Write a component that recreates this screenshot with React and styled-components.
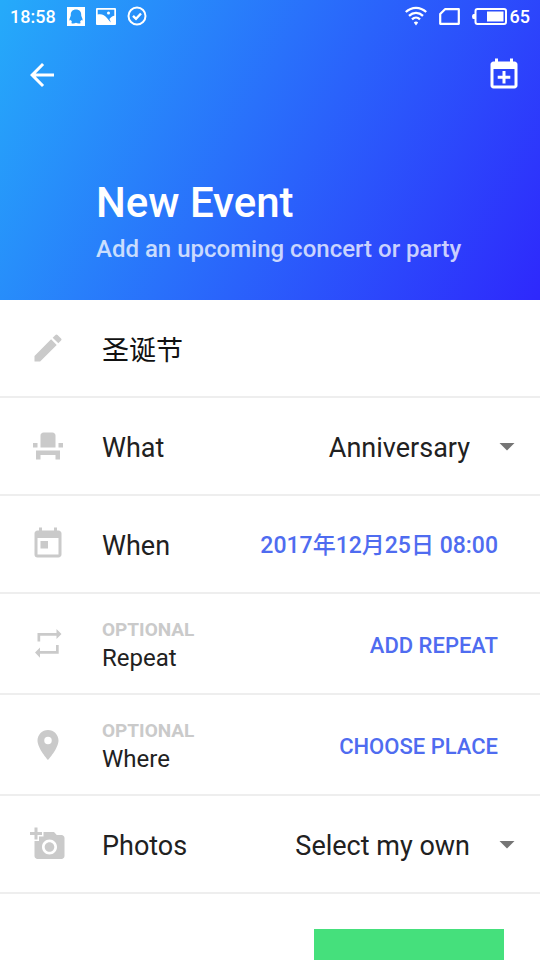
import { useState } from "react";
import styled, { createGlobalStyle } from "styled-components";
import {
  MdAddAPhoto,
  MdArrowBack,
  MdArrowDropDown,
  MdEdit,
  MdEventSeat,
  MdPlace,
  MdToday,
} from "react-icons/md";

const colors = {
  gradientStart: "#25abfa",
  gradientEnd: "#2e28fc",
  text: "#212121",
  icon: "#cacaca",
  caret: "#757575",
  divider: "#eeeeee",
  action: "#4f6cf0",
  submit: "#45e07c",
};

const GlobalStyle = createGlobalStyle`
  * {
    box-sizing: border-box;
  }

  body {
    margin: 0;
    background: #fff;
    color: ${colors.text};
    font-family: Roboto, "Noto Sans CJK SC", sans-serif;
  }

  button,
  input,
  select {
    margin: 0;
    padding: 0;
    border: 0;
    background: none;
    color: inherit;
    font-family: inherit;
  }

  svg {
    display: block;
    flex: none;
  }
`;

const Screen = styled.div`
  display: flex;
  flex-direction: column;
  height: 100vh;
  overflow: hidden;
`;

const Header = styled.header`
  flex: none;
  padding-bottom: 35px;
  color: #fff;
  background: linear-gradient(
    118deg,
    ${colors.gradientStart} 0%,
    ${colors.gradientEnd} 100%
  );
`;

const StatusBar = styled.div`
  display: flex;
  align-items: center;
  justify-content: space-between;
  height: 32px;
  padding: 0 10px;
  font-size: 18px;
  font-weight: 500;
`;

const StatusGroup = styled.div`
  display: flex;
  align-items: center;
  gap: ${({ $gap }) => $gap}px;
`;

const Battery = styled.span`
  display: flex;
  align-items: center;
  gap: 3px;
`;

const Toolbar = styled.nav`
  display: flex;
  align-items: center;
  justify-content: space-between;
  height: 86px;
  padding: 0 18px 0 24px;
`;

const IconButton = styled.button`
  cursor: pointer;
`;

const Heading = styled.div`
  padding: 61px 24px 0 96px;
`;

const Title = styled.h1`
  margin: 0 0 6px;
  font-size: 42px;
  font-weight: 500;
  line-height: 48px;
`;

const Subtitle = styled.p`
  margin: 0;
  color: rgba(255, 255, 255, 0.76);
  font-size: 24px;
  font-weight: 500;
  line-height: 32px;
`;

const Form = styled.form`
  flex: 1;
  min-height: 0;
  overflow-y: auto;
  scrollbar-width: none;
`;

const Row = styled.div`
  display: flex;
  align-items: center;
  gap: 36px;
  min-height: ${({ $tall }) => ($tall ? 101 : 98)}px;
  padding: 0 15px 0 30px;
  border-bottom: 2px solid ${colors.divider};

  > svg {
    color: ${colors.icon};
  }
`;

const Label = styled.label`
  flex: 1;
  padding-top: 4px;
  font-size: ${({ $small }) => ($small ? 24 : 27)}px;
  line-height: 32px;
`;

const Hint = styled.span`
  display: block;
  color: ${colors.icon};
  font-size: 19px;
  font-weight: 700;
  line-height: 24px;
`;

const NameInput = styled.input`
  flex: 1;
  min-width: 0;
  color: #111;
  font-size: 27px;
  outline: none;
`;

const SelectBox = styled.div`
  display: grid;
  align-items: center;

  > * {
    grid-area: 1 / 1;
  }

  > svg {
    justify-self: end;
    color: ${colors.caret};
    pointer-events: none;
  }
`;

const Select = styled.select`
  padding: 4px 55px 0 0;
  appearance: none;
  font-size: 27px;
  line-height: 32px;
  text-align-last: right;
  cursor: pointer;
`;

const ActionButton = styled.button`
  margin-right: 27px;
  padding-top: 4px;
  color: ${colors.action};
  font-size: ${({ $caps }) => ($caps ? 22 : 23)}px;
  font-weight: 500;
  line-height: 32px;
  cursor: pointer;
`;

const Footer = styled.div`
  display: flex;
  justify-content: flex-end;
  padding: 35px 36px;
`;

const SubmitButton = styled.button`
  width: 190px;
  height: 72px;
  background: ${colors.submit};
  cursor: pointer;
`;

const PenguinIcon = () => (
  <svg width="18" height="19" viewBox="0 0 18 19">
    <path
      fill="currentColor"
      fillRule="evenodd"
      d="M0 0h18v19H0zM9 2.6c-3.4 0-5.200 2.200-5.200 5.200 0 1-.1 1.500-.7 2.600-.7 1.300-.9 2.700-.4 3.100.4.2.9-.2 1.200-.7.2.9.6 1.500 1.200 2.100-.9.4-1 1.300.1 1.500 1.300.2 2.900 0 3.800-.6.900.6 2.500.8 3.800.6 1.100-.2 1-1.100.1-1.500.6-.6 1-1.200 1.200-2.100.3.5.8.9 1.200.7.5-.4.3-1.800-.4-3.100-.6-1.100-.7-1.600-.7-2.600 0-3-1.800-5.200-5.200-5.200z"
    />
  </svg>
);

const PictureIcon = () => (
  <svg width="20" height="17" viewBox="0 0 20 17">
    <path
      fill="currentColor"
      fillRule="evenodd"
      d="M1 0h18a1 1 0 0 1 1 1v15a1 1 0 0 1-1 1H1a1 1 0 0 1-1-1V1a1 1 0 0 1 1-1zM1.700 1.700v4.800C5.500 5.400 8.500 7 11.200 10.200c1 1.200 2.200 2.700 3.600 4.300-.4-1.500-.8-2.500-1.400-3.500 1.600-1.900 3.200-2.900 4.900-3.200V1.700z"
    />
    <circle cx="12.500" cy="5" r="1.500" fill="currentColor" />
  </svg>
);

const CheckIcon = () => (
  <svg width="20" height="20" viewBox="0 0 20 20" fill="none" stroke="currentColor">
    <circle cx="10" cy="10" r="8.500" strokeWidth="2" />
    <path d="M6 9.800l3 3 5-5.300" strokeWidth="2.400" />
  </svg>
);

const WifiIcon = () => (
  <svg width="22" height="20" viewBox="0 0 22 20" fill="none" stroke="currentColor">
    <path
      d="M.8 6C6.800 .4 15.200 .4 21.200 6M4 9.800c4.200-3.900 9.800-3.900 14 0M7 13.300c2.400-2.300 5.600-2.300 8 0"
      strokeWidth="2.300"
    />
    <path d="M8.800 16.500q2.200-1.800 4.400 0L11 19.500z" fill="currentColor" stroke="none" />
  </svg>
);

const SimIcon = () => (
  <svg width="21" height="17" viewBox="0 0 21 17" fill="none" stroke="currentColor">
    <path d="M6 1.200h13.800v14.600H1.200V6z" strokeWidth="2.200" strokeLinejoin="round" />
  </svg>
);

const BatteryIcon = () => (
  <svg width="35" height="17" viewBox="0 0 35 17">
    <rect
      x="3.500"
      y="1"
      width="30.500"
      height="15"
      rx="2"
      fill="none"
      stroke="currentColor"
      strokeWidth="2"
    />
    <path d="M3 6H1.500Q0 6 0 8.500T1.500 11H3z" fill="currentColor" />
    <path d="M15 3.500h16.500v10H15z" fill="currentColor" />
  </svg>
);

const CalendarAddIcon = () => (
  <svg width="36" height="36" viewBox="0 0 24 24" fill="currentColor">
    <path d="M19 3h-1V1h-2v2H8V1H6v2H5c-1.110 0-1.990.9-1.990 2L3 19c0 1.100.89 2 2 2h14c1.100 0 2-.9 2-2V5c0-1.100-.9-2-2-2zm0 16H5V8h14v11z" />
    <path d="M11 9.300h2v3.200h3.200v2H13v3.200h-2v-3.200H7.800v-2H11z" />
  </svg>
);

const RepeatIcon = () => (
  <svg width="36" height="36" viewBox="0 0 36 36" fill="currentColor">
    <path d="M7.500 15.500V7h19V3l5 5-5 5V9.700H10.200v5.800z" />
    <path d="M28.700 19v8.700H10v4L5 26.500l5-5V25h16V19z" />
  </svg>
);

const App = () => {
  const [name, setName] = useState("圣诞节");

  return (
    <>
      <GlobalStyle />
      <Screen>
        <Header>
          <StatusBar>
            <StatusGroup $gap={11}>
              <span>18:58</span>
              <PenguinIcon />
              <PictureIcon />
              <CheckIcon />
            </StatusGroup>
            <StatusGroup $gap={12}>
              <WifiIcon />
              <SimIcon />
              <Battery>
                <BatteryIcon />
                65
              </Battery>
            </StatusGroup>
          </StatusBar>
          <Toolbar>
            <IconButton type="button" aria-label="Back">
              <MdArrowBack size={36} />
            </IconButton>
            <IconButton type="button" aria-label="Add to calendar">
              <CalendarAddIcon />
            </IconButton>
          </Toolbar>
          <Heading>
            <Title>New Event</Title>
            <Subtitle>Add an upcoming concert or party</Subtitle>
          </Heading>
        </Header>

        <Form>
          <Row>
            <MdEdit size={36} />
            <NameInput
              aria-label="Event name"
              value={name}
              onChange={(e) => setName(e.target.value)}
            />
          </Row>
          <Row>
            <MdEventSeat size={36} />
            <Label htmlFor="what">What</Label>
            <SelectBox>
              <Select id="what">
                <option>Anniversary</option>
              </Select>
              <MdArrowDropDown size={36} />
            </SelectBox>
          </Row>
          <Row>
            <MdToday size={36} />
            <Label htmlFor="when">When</Label>
            <ActionButton id="when" type="button">
              2017年12月25日 08:00
            </ActionButton>
          </Row>
          <Row $tall>
            <RepeatIcon />
            <Label htmlFor="repeat" $small>
              <Hint>OPTIONAL</Hint>
              Repeat
            </Label>
            <ActionButton id="repeat" type="button" $caps>
              ADD REPEAT
            </ActionButton>
          </Row>
          <Row $tall>
            <MdPlace size={36} />
            <Label htmlFor="where" $small>
              <Hint>OPTIONAL</Hint>
              Where
            </Label>
            <ActionButton id="where" type="button" $caps>
              CHOOSE PLACE
            </ActionButton>
          </Row>
          <Row>
            <MdAddAPhoto size={36} />
            <Label htmlFor="photos">Photos</Label>
            <SelectBox>
              <Select id="photos">
                <option>Select my own</option>
              </Select>
              <MdArrowDropDown size={36} />
            </SelectBox>
          </Row>
          <Footer>
            <SubmitButton type="submit" aria-label="Save event" />
          </Footer>
        </Form>
      </Screen>
    </>
  );
};

export default App;
